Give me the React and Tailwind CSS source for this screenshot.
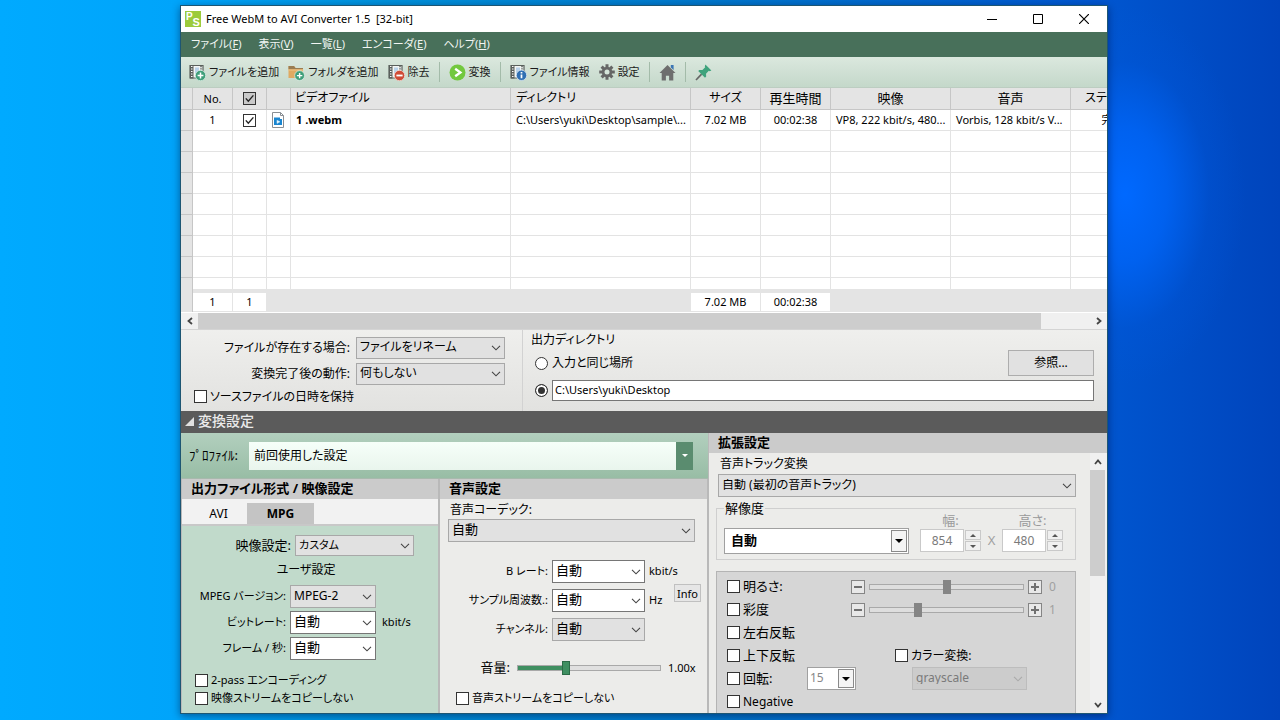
import React, { useState } from 'react';
import clsx from 'clsx';

const menus = [
  { label: 'ファイル', accel: 'F' },
  { label: '表示', accel: 'V' },
  { label: '一覧', accel: 'L' },
  { label: 'エンコーダ', accel: 'E' },
  { label: 'ヘルプ', accel: 'H' },
];

const emptyRows = [1, 2, 3, 4, 5, 6, 7];

const Chevron = ({ className }) => (
  <svg viewBox="0 0 10 6" className={clsx('pointer-events-none absolute w-[10px] h-[6px]', className)} fill="none" stroke="currentColor">
    <path d="M1 0.8 L5 4.8 L9 0.8" strokeWidth="1.1" />
  </svg>
);

const Select = ({ id, label, value, white, disabled, className }) => (
  <div className={clsx('relative shrink-0 text-[#444]', disabled && 'text-[#aaa]', className)}>
    <select
      id={id}
      aria-label={label}
      disabled={disabled}
      defaultValue={value}
      className={clsx(
        'block h-full w-full appearance-none border pb-[2px] pl-[3px] pr-5 leading-none outline-none',
        white && 'border-[#767676] bg-white text-black',
        !white && !disabled && 'border-[#a8a8a8] bg-[#e1e1e1] text-black',
        disabled && 'border-[#bdbdbd] bg-[#cccccc] text-[#7a7a7a] opacity-100'
      )}
    >
      <option>{value}</option>
    </select>
    <Chevron className="right-[4px] top-1/2 -translate-y-1/2" />
  </div>
);

// combo box with a framed arrow button
const ArrowSelect = ({ label, value, className, selectClass, disabled }) => (
  <div className={clsx('relative shrink-0', className)}>
    <select
      aria-label={label}
      defaultValue={value}
      disabled={disabled}
      className={clsx('block h-full w-full appearance-none border border-[#a0a0a0] bg-white pb-[2px] leading-none outline-none', selectClass)}
    >
      <option>{value}</option>
    </select>
    <span className="pointer-events-none absolute inset-y-[2px] right-[2px] flex w-[16px] items-center justify-center border border-[#8a8a8a] bg-[#f4f4f4]">
      <svg viewBox="0 0 8 4" className="h-[4px] w-[8px]"><path d="M0 0h8L4 4z" fill="#000" /></svg>
    </span>
  </div>
);

const CheckBox = ({ id, label, checked = false, className }) => {
  const [on, setOn] = useState(checked);
  return (
    <span className={clsx('relative block h-[13px] w-[13px] shrink-0', className)}>
      <input
        type="checkbox"
        id={id}
        aria-label={label}
        checked={on}
        onChange={() => setOn(!on)}
        className="block h-full w-full appearance-none border border-[#333] bg-inherit"
      />
      {on && (
        <svg viewBox="0 0 13 13" className="pointer-events-none absolute inset-0" fill="none" stroke="#222">
          <path d="M2.8 6.4 L5.3 9.2 L10.4 3.4" strokeWidth="1.4" />
        </svg>
      )}
    </span>
  );
};

const CheckField = ({ id, label, className }) => (
  <div className={clsx('flex items-center gap-[3px] whitespace-nowrap', className)}>
    <CheckBox id={id} className="bg-white" />
    <label htmlFor={id}>{label}</label>
  </div>
);

const Film = () => (
  <>
    <path d="M1 1.5h13v12.5h-13z" fill="#f3f6f4" stroke="#5a605c" strokeWidth="1.2" />
    <path d="M1 1h3.5v13.5H1z" fill="#5a605c" />
    <path d="M2 2.5h1.5M2 5h1.5M2 7.5h1.5M2 10h1.5M2 12.5h1.5" stroke="#fff" strokeWidth="1.2" />
    <path d="M12 2v4" stroke="#5a605c" strokeWidth="1.5" strokeDasharray="1.2 1" />
    <path d="M6 3.5h4v6H6z" fill="#b9d3ea" />
  </>
);

const AddFileIcon = () => (
  <svg viewBox="0 0 17 17" className="h-[17px] w-[17px]">
    <Film />
    <circle cx="11.5" cy="11.5" r="5.2" fill="#3f9f7a" stroke="#e4f1e9" strokeWidth="0.7" />
    <path d="M11.5 8.6v5.8M8.6 11.5h5.8" stroke="#fff" strokeWidth="1.5" />
  </svg>
);

const AddFolderIcon = () => (
  <svg viewBox="0 0 17 17" className="h-[17px] w-[17px]">
    <path d="M0.5 2h5.5l1.5 2h7.5v10H0.5z" fill="#e0aa62" />
    <path d="M0.5 2h5.5l1.5 2H15v1.3H0.5z" fill="#9a7d52" />
    <path d="M0.5 5.5h14.5v1H0.5z" fill="#f1c788" />
    <circle cx="11.6" cy="11.6" r="4.9" fill="#3f9f7a" stroke="#e4f1e9" strokeWidth="0.7" />
    <path d="M11.6 8.9v5.4M8.9 11.6h5.4" stroke="#fff" strokeWidth="1.4" />
  </svg>
);

const RemoveIcon = () => (
  <svg viewBox="0 0 17 17" className="h-[17px] w-[17px]">
    <Film />
    <circle cx="11.5" cy="11.5" r="5.2" fill="#cf4b36" stroke="#f3e4e0" strokeWidth="0.7" />
    <path d="M8.4 11.5h6.2" stroke="#fff" strokeWidth="1.8" />
  </svg>
);

const ConvertIcon = () => (
  <svg viewBox="0 0 17 17" className="h-[17px] w-[17px]">
    <circle cx="8.5" cy="8.5" r="8" fill="#72c83e" />
    <path d="M6.2 4.8 L11.4 8.5 L6.2 12.2" fill="none" stroke="#fff" strokeWidth="2.3" />
  </svg>
);

const InfoIcon = () => (
  <svg viewBox="0 0 17 17" className="h-[17px] w-[17px]">
    <Film />
    <circle cx="11.5" cy="11.3" r="5.2" fill="#2f6fb3" stroke="#e4eef6" strokeWidth="0.7" />
    <path d="M11.5 10.5v3.8M11.5 8v1.5" stroke="#fff" strokeWidth="1.7" />
  </svg>
);

const GearIcon = () => (
  <svg viewBox="0 0 16 16" className="h-[16px] w-[16px]">
    <g stroke="#666" strokeWidth="3">
      <path d="M8 0.2v15.6M0.2 8h15.6M2.6 2.6l10.8 10.8M13.4 2.6L2.6 13.4" />
    </g>
    <circle cx="8" cy="8" r="5.2" fill="#666" />
    <circle cx="8" cy="8" r="2.5" fill="#d5e4d9" />
  </svg>
);

const HomeIcon = () => (
  <svg viewBox="0 0 17 17" className="h-[17px] w-[17px]">
    <path d="M11.8 1h2.8v5l-2.8-2.5z" fill="#3c76b4" />
    <path d="M8.5 1 L0.5 9 h2.2 v7.5 h4.2 v-4.8 h3.2 v4.8 h4.2 V9 h2.2 z" fill="#6e6e6e" />
  </svg>
);

const PinIcon = () => (
  <svg viewBox="0 0 17 17" className="h-[17px] w-[17px]">
    <path d="M6.6 10.2 L1 16" stroke="#666" strokeWidth="1.7" />
    <path d="M10.4 0.6 L16.4 6.6 L14.6 7.2 L13.8 6.8 L11 9.7 L11.2 12.6 L10 13.8 L3.2 7 L4.4 5.9 L7.4 6.1 L10.2 3.2 L9.8 2.4 z" fill="#3fa37c" />
  </svg>
);

const ToolButton = ({ icon, label }) => (
  <button type="button" className="flex items-center gap-[3px] whitespace-nowrap" aria-label={label}>
    {icon}
    <span>{label}</span>
  </button>
);

const Separator = () => <span className="h-[20px] w-px bg-[#a3bba9]" />;

const TitleBar = () => (
  <header className="flex h-[26px] items-center bg-white pl-[4px] text-[11px] text-black">
    <svg viewBox="0 0 16 16" className="h-[16px] w-[16px]">
      <rect width="16" height="16" fill="#9ccb3b" />
      <text x="1" y="9" fontSize="10" fontWeight="bold" fill="#fff" fontFamily="Liberation Sans">P</text>
      <text x="7.5" y="14.5" fontSize="11" fontWeight="bold" fill="#fff" fontFamily="Liberation Sans">S</text>
    </svg>
    <h1 className="ml-[5px] flex-1 whitespace-pre">Free WebM to AVI Converter 1.5  [32-bit]</h1>
    <button type="button" aria-label="最小化" className="flex w-[46px] justify-center">
      <svg viewBox="0 0 10 10" className="h-[10px] w-[10px]"><path d="M0 5.5h10" stroke="#000" /></svg>
    </button>
    <button type="button" aria-label="最大化" className="flex w-[46px] justify-center">
      <svg viewBox="0 0 10 10" className="h-[10px] w-[10px]"><path d="M0.5 0.5h9v9h-9z" fill="none" stroke="#000" /></svg>
    </button>
    <button type="button" aria-label="閉じる" className="flex w-[46px] justify-center">
      <svg viewBox="0 0 10 10" className="h-[10px] w-[10px]"><path d="M0 0l10 10M10 0L0 10" stroke="#000" strokeWidth="1.2" /></svg>
    </button>
  </header>
);

const th = 'border-b border-r border-[#c6c6c6] font-normal';
const td = 'h-[21px] border-b border-r border-[#e3e3e3] bg-white pl-[5px] pr-[2px] truncate';
const tdCenter = 'h-[21px] border-b border-r border-[#e3e3e3] bg-white text-center';
const gutter = 'border-b border-r border-[#c6c6c6] bg-[#e4e4e4]';
const tf = 'border-b border-t-4 border-[#e4e4e4] bg-white';

const FileTable = () => (
  <div className="overflow-hidden bg-[#e4e4e4]">
    <table className="w-[974px] table-fixed border-separate border-spacing-0 text-[11px] text-black">
      <colgroup>
        <col className="w-[12px]" />
        <col className="w-[40px]" />
        <col className="w-[34px]" />
        <col className="w-[24px]" />
        <col className="w-[220px]" />
        <col className="w-[180px]" />
        <col className="w-[70px]" />
        <col className="w-[70px]" />
        <col className="w-[120px]" />
        <col className="w-[120px]" />
        <col className="w-[84px]" />
      </colgroup>
      <thead>
        <tr className="h-[22px] bg-[#e4e4e4] text-[13px] leading-[18px]">
          <th className={th}></th>
          <th className={clsx(th, 'text-[11px]')}>No.</th>
          <th className={th}><CheckBox label="すべて選択" checked className="mx-auto bg-[#c9c9c9]" /></th>
          <th className={th}></th>
          <th className={clsx(th, 'pb-[2px] pl-[4px] text-left text-xs leading-[18px]')}>ビデオファイル</th>
          <th className={clsx(th, 'pb-[2px] pl-[5px] text-left text-xs leading-[18px]')}>ディレクトリ</th>
          <th className={clsx(th, 'pb-[2px] text-xs leading-[18px]')}>サイズ</th>
          <th className={clsx(th, 'pb-[2px]')}>再生時間</th>
          <th className={clsx(th, 'pb-[2px]')}>映像</th>
          <th className={clsx(th, 'pb-[2px]')}>音声</th>
          <th className={clsx(th, 'pb-[2px] text-xs leading-[18px]')}>ステータス</th>
        </tr>
      </thead>
      <tbody className="leading-[20px]">
        <tr>
          <td className={gutter}></td>
          <td className={tdCenter}>1</td>
          <td className={tdCenter}><CheckBox label="1 .webm" checked className="mx-auto bg-white" /></td>
          <td className={td}>
            <svg viewBox="0 0 12 16" className="h-[16px] w-[12px]">
              <path d="M0.5 0.5h8l3 3v12h-11z" fill="#fff" stroke="#8a8f94" />
              <path d="M8.5 0.5v3h3" fill="none" stroke="#8a8f94" />
              <path d="M2 5.5h6v1.5h2v6H2z" fill="#1a86d0" />
              <path d="M5 8.2l3 1.6-3 1.6z" fill="#fff" stroke="#bfe2f7" strokeWidth="0.6" />
            </svg>
          </td>
          <td className={clsx(td, 'text-[11px] font-bold')}>1 .webm</td>
          <td className={td}>C:\Users\yuki\Desktop\sample\...</td>
          <td className={tdCenter}>7.02 MB</td>
          <td className={tdCenter}>00:02:38</td>
          <td className={td}>VP8, 222 kbit/s, 480...</td>
          <td className={td}>Vorbis, 128 kbit/s V...</td>
          <td className={tdCenter}>完了</td>
        </tr>
        {emptyRows.map(row => (
          <tr key={row}>
            <td className={gutter}></td>
            {[...Array(10)].map((_, i) => <td key={i} className={td}></td>)}
          </tr>
        ))}
        <tr className="h-[11px]">
          <td className="border-r border-[#c6c6c6] bg-[#e4e4e4]"></td>
          {[...Array(10)].map((_, i) => <td key={i} className="border-r border-[#e3e3e3] bg-white"></td>)}
        </tr>
      </tbody>
      <tfoot className="text-center leading-[18px]">
        <tr className="h-[23px]">
          <td className="border-r border-[#c6c6c6]"></td>
          <td className={clsx(tf, 'border-r')}>1</td>
          <td className={clsx(tf, 'border-r')}>1</td>
          <td></td>
          <td></td>
          <td></td>
          <td className={clsx(tf, 'border-r')}>7.02 MB</td>
          <td className={clsx(tf, 'border-r')}>00:02:38</td>
          <td></td>
          <td></td>
          <td></td>
        </tr>
      </tfoot>
    </table>
  </div>
);

const ScrollArrow = ({ d, label, className }) => (
  <button type="button" aria-label={label} className={clsx('flex shrink-0 items-center justify-center', className)}>
    <svg viewBox="0 0 8 8" className="h-[8px] w-[8px]" fill="none" stroke="#444" strokeWidth="1.8"><path d={d} /></svg>
  </button>
);

const OutputOptions = () => (
  <section className="flex h-[81px] bg-linear-to-b from-[#efefed] to-[#e2e2e0] text-xs text-black">
    <div className="flex w-[342px] shrink-0 flex-col gap-[4px] border-r border-[#d2d2d2] pt-[7px]">
      <div className="flex items-center gap-[6px]">
        <label htmlFor="exists" className="w-[169px] text-right">ファイルが存在する場合:</label>
        <Select id="exists" value="ファイルをリネーム" className="h-[22px] w-[149px]" />
      </div>
      <div className="flex items-center gap-[6px]">
        <label htmlFor="after" className="w-[169px] text-right">変換完了後の動作:</label>
        <Select id="after" value="何もしない" className="h-[22px] w-[149px]" />
      </div>
      <CheckField id="keepdate" label="ソースファイルの日時を保持" className="h-[15px] pl-[13px]" />
    </div>
    <div className="flex-1 pl-[8px] pr-[13px]">
      <h2 className="h-[20px] leading-[20px]">出力ディレクトリ</h2>
      <div className="flex h-[26px] items-center justify-between pl-[4px]">
        <div className="flex items-center gap-[4px]">
          <input type="radio" id="same" name="dest" className="h-[13px] w-[13px] appearance-none rounded-full border border-[#333] bg-white checked:bg-[#333] checked:shadow-[inset_0_0_0_2px_white]" />
          <label htmlFor="same">入力と同じ場所</label>
        </div>
        <button type="button" className="h-[26px] w-[86px] border border-[#adadad] bg-[#e1e1e1] text-xs">参照...</button>
      </div>
      <div className="mt-[4px] flex items-center gap-[4px] pl-[4px]">
        <input type="radio" name="dest" aria-label="出力先を指定" defaultChecked className="h-[13px] w-[13px] shrink-0 appearance-none rounded-full border border-[#333] bg-white checked:bg-[#333] checked:shadow-[inset_0_0_0_2px_white]" />
        <input type="text" aria-label="出力ディレクトリ" defaultValue="C:\Users\yuki\Desktop" className="h-[21px] min-w-0 flex-1 border border-[#767676] bg-white px-[2px] pb-[2px] text-[11px] outline-none" />
      </div>
    </div>
  </section>
);

const FormRow = ({ id, label, value, unit, white, labelClass, selectClass }) => (
  <div className="flex h-[23px] items-center gap-[4px] whitespace-nowrap">
    <label htmlFor={id} className={clsx('shrink-0 text-right text-[11px]', labelClass)}>{label}</label>
    <Select id={id} value={value} white={white} className={clsx('h-[23px]', selectClass)} />
    {unit && <span className="text-[11px]">{unit}</span>}
  </div>
);

const panelTitle = 'h-[20px] bg-[#cbcbcb] text-[13px] leading-[18px] font-bold';

const VideoPanel = () => (
  <section className="flex flex-col border-x border-[#b9b9b9] bg-[#c1dacb] text-[13px]">
    <h2 className={clsx(panelTitle, 'pl-[9px]')}>出力ファイル形式 / 映像設定</h2>
    <div role="tablist" className="flex h-[27px] items-end border-b-2 border-[#c8c8c8] bg-[#f2f2f2] pl-[8px] text-xs">
      <button type="button" role="tab" className="h-[21px] w-[57px]">AVI</button>
      <button type="button" role="tab" aria-selected="true" className="h-[21px] w-[67px] bg-[#c4c4c4] font-bold">MPG</button>
    </div>
    <div className="flex-1 pt-[9px]">
      <div className="flex h-[21px] items-center gap-[4px]">
        <label htmlFor="vset" className="w-[109px] text-right">映像設定:</label>
        <Select id="vset" value="カスタム" className="h-[21px] w-[119px] text-[11px]" />
      </div>
      <p className="h-[29px] pr-[8px] text-center text-xs leading-[28px]">ユーザ設定</p>
      <div className="space-y-[3px]">
        <FormRow id="mpegver" label="MPEG バージョン:" value="MPEG-2" labelClass="w-[104px]" selectClass="mr-[2px] w-[86px] text-xs" />
        <FormRow id="bitrate" label="ビットレート:" value="自動" unit="kbit/s" white labelClass="w-[104px]" selectClass="mr-[2px] w-[86px]" />
        <FormRow id="fps" label="フレーム / 秒:" value="自動" white labelClass="w-[104px]" selectClass="mr-[2px] w-[86px]" />
      </div>
      <div className="mt-[12px] pl-[13px] text-[11px]">
        <CheckField id="twopass" label="2-pass エンコーディング" className="h-[17px]" />
        <CheckField id="vcopy" label="映像ストリームをコピーしない" className="h-[18px]" />
      </div>
    </div>
  </section>
);

const AudioPanel = () => (
  <section className="border-x border-[#b9b9b9] bg-[#ececea] text-[13px]">
    <h2 className={clsx(panelTitle, 'pl-[9px]')}>音声設定</h2>
    <div className="pl-[8px] pr-[12px]">
      <label htmlFor="acodec" className="block h-[20px] pl-[2px] text-xs leading-[22px]">音声コーデック:</label>
      <Select id="acodec" value="自動" className="h-[23px] w-full" />
    </div>
    <div className="mt-[18px] flex">
      <div className="w-[234px] shrink-0 space-y-[6px]">
        <FormRow id="abit" label="B レート:" value="自動" unit="kbit/s" white labelClass="w-[108px]" selectClass="w-[93px]" />
        <FormRow id="arate" label="サンプル周波数.:" value="自動" unit="Hz" white labelClass="w-[108px]" selectClass="w-[93px]" />
        <FormRow id="ach" label="チャンネル:" value="自動" labelClass="w-[108px]" selectClass="w-[93px]" />
      </div>
      <button type="button" className="mt-[24px] h-[18px] w-[27px] border border-[#c0c0c0] bg-[#e6e6e6] text-[11px] leading-none">Info</button>
    </div>
    <div className="mt-[17px] flex h-[20px] items-center">
      <label htmlFor="volume" className="w-[70px] text-right text-[13px]">音量:</label>
      <input
        id="volume"
        type="range"
        min="0"
        max="200"
        defaultValue="65"
        className="ml-[7px] h-[14px] w-[144px] appearance-none bg-transparent [&::-webkit-slider-runnable-track]:h-[6px] [&::-webkit-slider-runnable-track]:border [&::-webkit-slider-runnable-track]:border-[#a9a9a9] [&::-webkit-slider-runnable-track]:bg-[linear-gradient(to_right,#3f8f61_33%,#e0e0e0_33%)] [&::-webkit-slider-thumb]:-mt-[5px] [&::-webkit-slider-thumb]:h-[14px] [&::-webkit-slider-thumb]:w-[8px] [&::-webkit-slider-thumb]:appearance-none [&::-webkit-slider-thumb]:border [&::-webkit-slider-thumb]:border-[#2c6b47] [&::-webkit-slider-thumb]:bg-[#3f8f61]"
      />
      <span className="ml-[7px] text-[11px]">1.00x</span>
    </div>
    <CheckField id="acopy" label="音声ストリームをコピーしない" className="mt-[10px] h-[20px] pl-[16px] text-[11px]" />
  </section>
);

const StepButton = ({ label, plus }) => (
  <button type="button" aria-label={label} className="flex h-[14px] w-[14px] shrink-0 items-center justify-center border border-[#858585] bg-[#e8e8e8]">
    <svg viewBox="0 0 8 8" className="h-[8px] w-[8px]" stroke="#707070" strokeWidth="2"><path d={plus ? 'M0 4h8M4 0v8' : 'M0 4h8'} /></svg>
  </button>
);

const AdjustRow = ({ id, label, value, text }) => (
  <div className="flex h-[23px] items-center">
    <CheckField id={id} label={label} className="w-[124px]" />
    <StepButton label={`${label} -`} />
    <input
      type="range"
      aria-label={label}
      min="0"
      max="100"
      defaultValue={value}
      className="mx-[4px] h-[14px] w-[155px] appearance-none bg-transparent [&::-webkit-slider-runnable-track]:h-[6px] [&::-webkit-slider-runnable-track]:border [&::-webkit-slider-runnable-track]:border-[#a9a9a9] [&::-webkit-slider-runnable-track]:bg-[#dedede] [&::-webkit-slider-thumb]:-mt-[5px] [&::-webkit-slider-thumb]:h-[14px] [&::-webkit-slider-thumb]:w-[8px] [&::-webkit-slider-thumb]:appearance-none [&::-webkit-slider-thumb]:bg-[#858585]"
    />
    <StepButton label={`${label} +`} plus />
    <span className="ml-[7px] text-[12px] text-[#a0a0a0]">{text}</span>
  </div>
);

const SpinField = ({ id, label, value }) => (
  <div className="flex flex-col">
    <label htmlFor={id} className="h-[16px] w-[61px] text-center text-[13px] leading-[14px] text-[#9a9a9a]">{label}</label>
    <div className="flex items-center gap-px">
      <input id={id} type="text" defaultValue={value} className="h-[23px] w-[44px] border border-[#c9c9c9] bg-white text-center text-xs text-[#7a7a7a] outline-none" />
      <div className="flex flex-col gap-px">
        <button type="button" aria-label={`${label} ▲`} className="flex h-[10px] w-[16px] items-center justify-center border border-[#c9c9c9] bg-[#f0f0f0]">
          <svg viewBox="0 0 6 3" className="h-[3px] w-[6px]"><path d="M0 3h6L3 0z" fill="#555" /></svg>
        </button>
        <button type="button" aria-label={`${label} ▼`} className="flex h-[10px] w-[16px] items-center justify-center border border-[#c9c9c9] bg-[#f0f0f0]">
          <svg viewBox="0 0 6 3" className="h-[3px] w-[6px]"><path d="M0 0h6L3 3z" fill="#555" /></svg>
        </button>
      </div>
    </div>
  </div>
);

const ExtendedPanel = () => (
  <section className="flex min-w-0 flex-1 flex-col border-l border-[#b9b9b9] bg-[#ececea] text-[13px]">
    <h2 className={clsx(panelTitle, 'pl-[9px]')}>拡張設定</h2>
    <div className="flex flex-1">
      <div className="flex flex-1 flex-col pl-[7px] pr-[14px]">
        <label htmlFor="track" className="h-[21px] pl-[4px] text-xs leading-[22px]">音声トラック変換</label>
        <Select id="track" value="自動 (最初の音声トラック)" className="ml-[2px] h-[23px] text-xs" />
        <fieldset className="mt-[2px] border border-[#cfcfcf] pb-[5px] pl-[7px]">
          <legend className="h-[18px] px-px leading-[18px]">解像度</legend>
          <div className="flex h-[37px] items-end">
            <ArrowSelect label="解像度" value="自動" className="h-[26px] w-[185px]" selectClass="pl-[6px] font-bold" />
            <div className="ml-[11px] flex items-end gap-[6px] pb-[2px]">
              <SpinField id="width" label="幅:" value="854" />
              <span className="w-[9px] text-center leading-[23px] text-[#a0a0a0]">X</span>
              <SpinField id="height" label="高さ:" value="480" />
            </div>
          </div>
        </fieldset>
        <div className="mt-[11px] flex-1 border border-b-0 border-[#b4b4b4] bg-[#d6d6d6] pl-[10px] pt-[3px]">
          <AdjustRow id="bright" label="明るさ:" value="50" text="0" />
          <AdjustRow id="satur" label="彩度" value="30" text="1" />
          <CheckField id="fliph" label="左右反転" className="h-[23px]" />
          <div className="flex h-[23px] items-center">
            <CheckField id="flipv" label="上下反転" className="w-[168px]" />
            <CheckField id="colorconv" label="カラー変換:" className="text-xs" />
          </div>
          <div className="flex h-[23px] items-center">
            <CheckField id="rotate" label="回転:" className="w-[80px]" />
            <ArrowSelect label="回転角度" value="15" disabled className="h-[23px] w-[49px] text-xs" selectClass="pl-[2px] text-[#888] opacity-100" />
            <Select label="カラー変換" value="grayscale" disabled className="ml-[56px] h-[23px] w-[115px] text-xs" />
          </div>
          <CheckField id="negative" label="Negative" className="h-[23px] text-xs" />
        </div>
      </div>
      <div className="flex w-[17px] flex-col items-center bg-[#f0f0f0] pr-[2px]">
        <ScrollArrow label="上へ" d="M1 6 L4 2.5 L7 6" className="h-[17px] w-[15px]" />
        <div className="h-[106px] w-[15px] bg-[#cdcdcd]"></div>
        <ScrollArrow label="下へ" d="M1 2 L4 5.5 L7 2" className="mt-auto h-[17px] w-[15px]" />
      </div>
    </div>
  </section>
);

const App = () => {
  return (
    <div className="flex min-h-screen flex-col bg-[radial-gradient(ellipse_120px_190px_at_1125px_195px,#0069ff_0%,#0065f8cc_35%,#0058e044_70%,transparent_100%),linear-gradient(to_right,#00aaff_0%,#00a4fa_14%,#0092dc_30%,#0078cc_55%,#0056d0_86%,#0044bc_100%)] pb-[6px] pl-[180px] pr-[172px] pt-[5px] font-['Noto_Sans','Noto_Sans_CJK_JP',sans-serif] [font-feature-settings:'palt']">
      <main className="flex flex-1 flex-col overflow-hidden border border-[#1d5673] bg-[#ececea] shadow-[0_2px_8px_rgba(0,0,40,0.45)]">
        <TitleBar />
        <nav className="flex h-[25px] items-center gap-[17px] bg-[#48705a] pl-[10px] text-[11px] text-[#f2f6f3]">
          {menus.map(menu => (
            <button key={menu.accel} type="button" className="whitespace-nowrap">
              {menu.label}(<u>{menu.accel}</u>)
            </button>
          ))}
        </nav>
        <div className="flex h-[31px] items-center border-b border-[#bccdc1] bg-linear-to-b from-[#dbe8de] to-[#c4d8ca] pl-[8px] text-[11px] text-[#1a1a1a]">
          <div className="flex items-center gap-[9px]">
            <ToolButton icon={<AddFileIcon />} label="ファイルを追加" />
            <ToolButton icon={<AddFolderIcon />} label="フォルダを追加" />
            <ToolButton icon={<RemoveIcon />} label="除去" />
          </div>
          <div className="ml-[9px] flex items-center gap-[9px]">
            <Separator />
            <ToolButton icon={<ConvertIcon />} label="変換" />
            <Separator />
            <ToolButton icon={<InfoIcon />} label="ファイル情報" />
            <ToolButton icon={<GearIcon />} label="設定" />
            <Separator />
            <button type="button" aria-label="ホーム"><HomeIcon /></button>
            <Separator />
            <button type="button" aria-label="固定"><PinIcon /></button>
          </div>
        </div>
        <FileTable />
        <div className="flex h-[18px] border-b border-t border-b-[#d4d4d4] border-t-white bg-[#f0f0f0]">
          <ScrollArrow label="左へ" d="M6 1 L2.5 4 L6 7" className="w-[17px]" />
          <div className="mr-[49px] flex-1 bg-[#cdcdcd]"></div>
          <ScrollArrow label="右へ" d="M2 1 L5.5 4 L2 7" className="w-[17px]" />
        </div>
        <OutputOptions />
        <button type="button" className="flex h-[22px] items-center gap-[4px] bg-[#5b5b5b] pb-[2px] pl-[4px] text-[14px] leading-[20px] font-medium text-[#eaeaea]">
          <svg viewBox="0 0 9 9" className="h-[9px] w-[9px]"><path d="M9 0v9H0z" fill="#e0e0e0" /></svg>
          <span>変換設定</span>
        </button>
        <div className="flex flex-1 text-black">
          <div className="flex w-[527px] shrink-0 flex-col">
            <div className="flex h-[46px] items-center border-b border-[#a8b9ad] bg-linear-to-b from-[#b2cfbe] to-[#98bda5] pl-[8px] pr-[15px] text-[13px]">
              <label htmlFor="profile" className="w-[60px] shrink-0 whitespace-nowrap">ﾌﾟﾛﾌｧｲﾙ:</label>
              <div className="relative flex-1">
                <select id="profile" defaultValue="前回使用した設定" className="block h-[28px] w-full appearance-none bg-linear-to-b from-[#f6fff9] to-[#e9f5ed] pl-[5px] text-xs outline-none">
                  <option>前回使用した設定</option>
                </select>
                <span className="pointer-events-none absolute inset-y-0 right-0 flex w-[17px] items-center justify-center bg-[#5a8c6f]">
                  <svg viewBox="0 0 6 3" className="h-[3px] w-[6px]"><path d="M0 0h6L3 3z" fill="#fff" /></svg>
                </span>
              </div>
            </div>
            <div className="grid flex-1 grid-cols-[258px_1fr]">
              <VideoPanel />
              <AudioPanel />
            </div>
          </div>
          <ExtendedPanel />
        </div>
      </main>
    </div>
  );
};

export default App;
